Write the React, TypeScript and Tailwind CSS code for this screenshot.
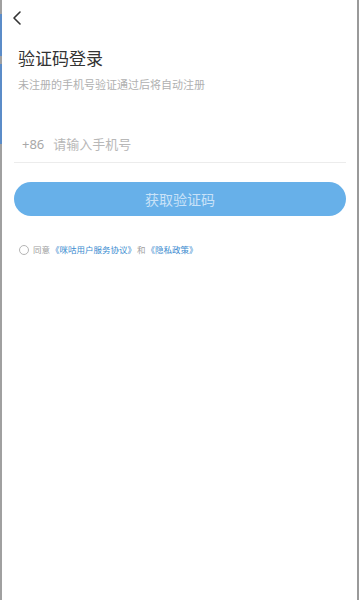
import React from "react";

export default function App() {
  return (
    <div
      className="relative w-[360px] h-[600px] bg-white overflow-hidden"
      style={{ fontFamily: '"Noto Sans", "Noto Sans CJK SC", sans-serif' }}
    >
      {/* edge artifacts */}
      <div className="absolute left-0 top-0 w-[2px] h-[600px] bg-[#a0a0a0]" />
      <div className="absolute left-0 top-[14px] w-[2px] h-[42px] bg-[#5b8cc8]" />
      <div className="absolute left-0 top-[64px] w-[2px] h-[80px] bg-[#5b8cc8]" />
      <div className="absolute right-[1px] top-0 w-[2px] h-[600px] bg-[#9a9a9a]" />

      <div className="flex flex-col">
        <div className="h-[36px] pl-[11px] pt-[10px]">
          <svg width="14" height="16" viewBox="0 0 14 16" fill="none">
            <path d="M9 2 L3 8 L9 14" stroke="#333" strokeWidth="1.6" strokeLinecap="round" strokeLinejoin="round" />
          </svg>
        </div>
        <div className="pl-[18px] mt-[10px] text-[17px] leading-[26px] text-[#333]">验证码登录</div>
        <div className="pl-[18px] mt-[5px] text-[11px] leading-[16px] text-[#b0b0b0]">
          未注册的手机号验证通过后将自动注册
        </div>

        <div className="mx-[14px] mt-[34px] h-[36px] flex items-center border-b border-[#ececec]">
          <span className="ml-[8px] text-[13px] text-[#a8a8a8]">+86</span>
          <span className="ml-[9px] text-[13px] text-[#b8b8b8]">请输入手机号</span>
        </div>

        <div className="mx-[14px] mt-[19px] h-[34px] rounded-full bg-[#67b0e9] flex items-center justify-center">
          <span className="text-[14px] text-[#c9e2f8]">获取验证码</span>
        </div>

        <div className="ml-[19px] mt-[27px] h-[13px] flex items-center text-[8.5px] leading-[13px]">
          <div className="w-[10px] h-[10px] rounded-full border border-[#b5b5b5]" />
          <span className="ml-[4px] text-[#a0a0a0]">同意</span>
          <span className="ml-[1px] text-[#3a8bd0]">《咪咕用户服务协议》</span>
          <span className="ml-[1px] text-[#a0a0a0]">和</span>
          <span className="ml-[1px] text-[#3a8bd0]">《隐私政策》</span>
        </div>
      </div>
    </div>
  );
}
